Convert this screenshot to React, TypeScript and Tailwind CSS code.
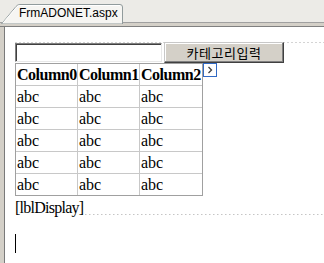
import React from "react";

const rows = [0, 1, 2, 3, 4];
const cols = ["Column0", "Column1", "Column2"];

const dotsX = "bg-[linear-gradient(to_right,#a8a8a8_1px,transparent_1px)] bg-[length:4px_1px] bg-repeat-x";

export default function App() {
  return (
    <div className="w-[324px] h-[263px] overflow-hidden bg-white flex flex-col font-['Liberation_Serif',serif] text-black">
      {/* document tab strip */}
      <div className="relative h-[23px] shrink-0 bg-[#ecebe7] border-b border-[#a0a0a0]">
        <div className="absolute left-[1px] top-[4px] w-[123px] h-[20px]">
          <svg className="absolute inset-0" width="123" height="20" viewBox="0 0 123 20">
            <path
              d="M0.5,20 L15,2.5 Q16.5,0.5 19,0.5 L119,0.5 Q121.5,0.5 121.5,3 L121.5,20 Z"
              fill="#f6f5f2"
              stroke="#919b9c"
            />
            <path d="M2,19 L15.5,3.2 Q17,1.5 19,1.5 L119,1.5" fill="none" stroke="#ffffff" />
          </svg>
          <span className="absolute left-[18px] top-[2px] text-[12px] leading-[14px] font-['Liberation_Sans',sans-serif] text-black">
            FrmADONET.aspx
          </span>
        </div>
      </div>
      <div className="h-[4px] shrink-0 bg-[#d4d0c8] border-b border-[#808080]" />

      {/* design surface */}
      <div className="flex flex-1">
        <div className="w-[5px] shrink-0 bg-[#d4d0c8] border-r border-[#7a7a7a]" />
        <div className="flex-1 flex flex-col pl-[10px] pt-[15px]">
          <div className={`flex items-start h-[21px] ${dotsX} bg-top`}>
            <div className="mt-px w-[147px] h-[19px] bg-white border border-t-[#808080] border-l-[#808080] border-r-[#e8e8e8] border-b-[#e8e8e8] shadow-[inset_1px_1px_0_#404040]" />
            <button className="ml-[2px] w-[120px] h-[21px] bg-[#d4d0c8] border border-t-[#c8c8c8] border-l-[#c8c8c8] border-r-[#404040] border-b-[#404040] shadow-[inset_-1px_-1px_0_#808080,inset_1px_1px_0_#ffffff] flex items-center justify-center text-[13px] leading-[15px] tracking-[0.5px] font-['Noto_Sans_CJK_KR',sans-serif]">
              카테고리입력
            </button>
          </div>

          <div className="flex items-start">
            <div className="grid grid-cols-[61px_61px_62px] gap-px bg-[#c8c8c8] border border-[#a0a0a0] text-[16px] leading-[21px]">
              {cols.map((c) => (
                <div key={c} className="bg-white h-[21px] pl-px font-bold tracking-[-0.5px] whitespace-nowrap overflow-hidden">
                  {c}
                </div>
              ))}
              {rows.map((r) =>
                cols.map((c) => (
                  <div key={`${r}-${c}`} className="bg-white h-[21px] pl-px">
                    abc
                  </div>
                ))
              )}
            </div>
            <div className="w-[14px] h-[14px] bg-white border border-[#316ac5] flex items-center justify-center">
              <svg width="6" height="8" viewBox="0 0 6 8">
                <path d="M1.5,1 L4.5,4 L1.5,7" fill="none" stroke="#404040" strokeWidth="1.3" />
              </svg>
            </div>
          </div>

          <div className="flex h-[19px]">
            <span className="text-[16px] tracking-[-0.75px] whitespace-nowrap">[lblDisplay]</span>
            <div className={`flex-1 ${dotsX} bg-bottom`} />
          </div>

          <div className="mt-[19px] w-px h-[19px] bg-black" />
        </div>
      </div>
    </div>
  );
}
